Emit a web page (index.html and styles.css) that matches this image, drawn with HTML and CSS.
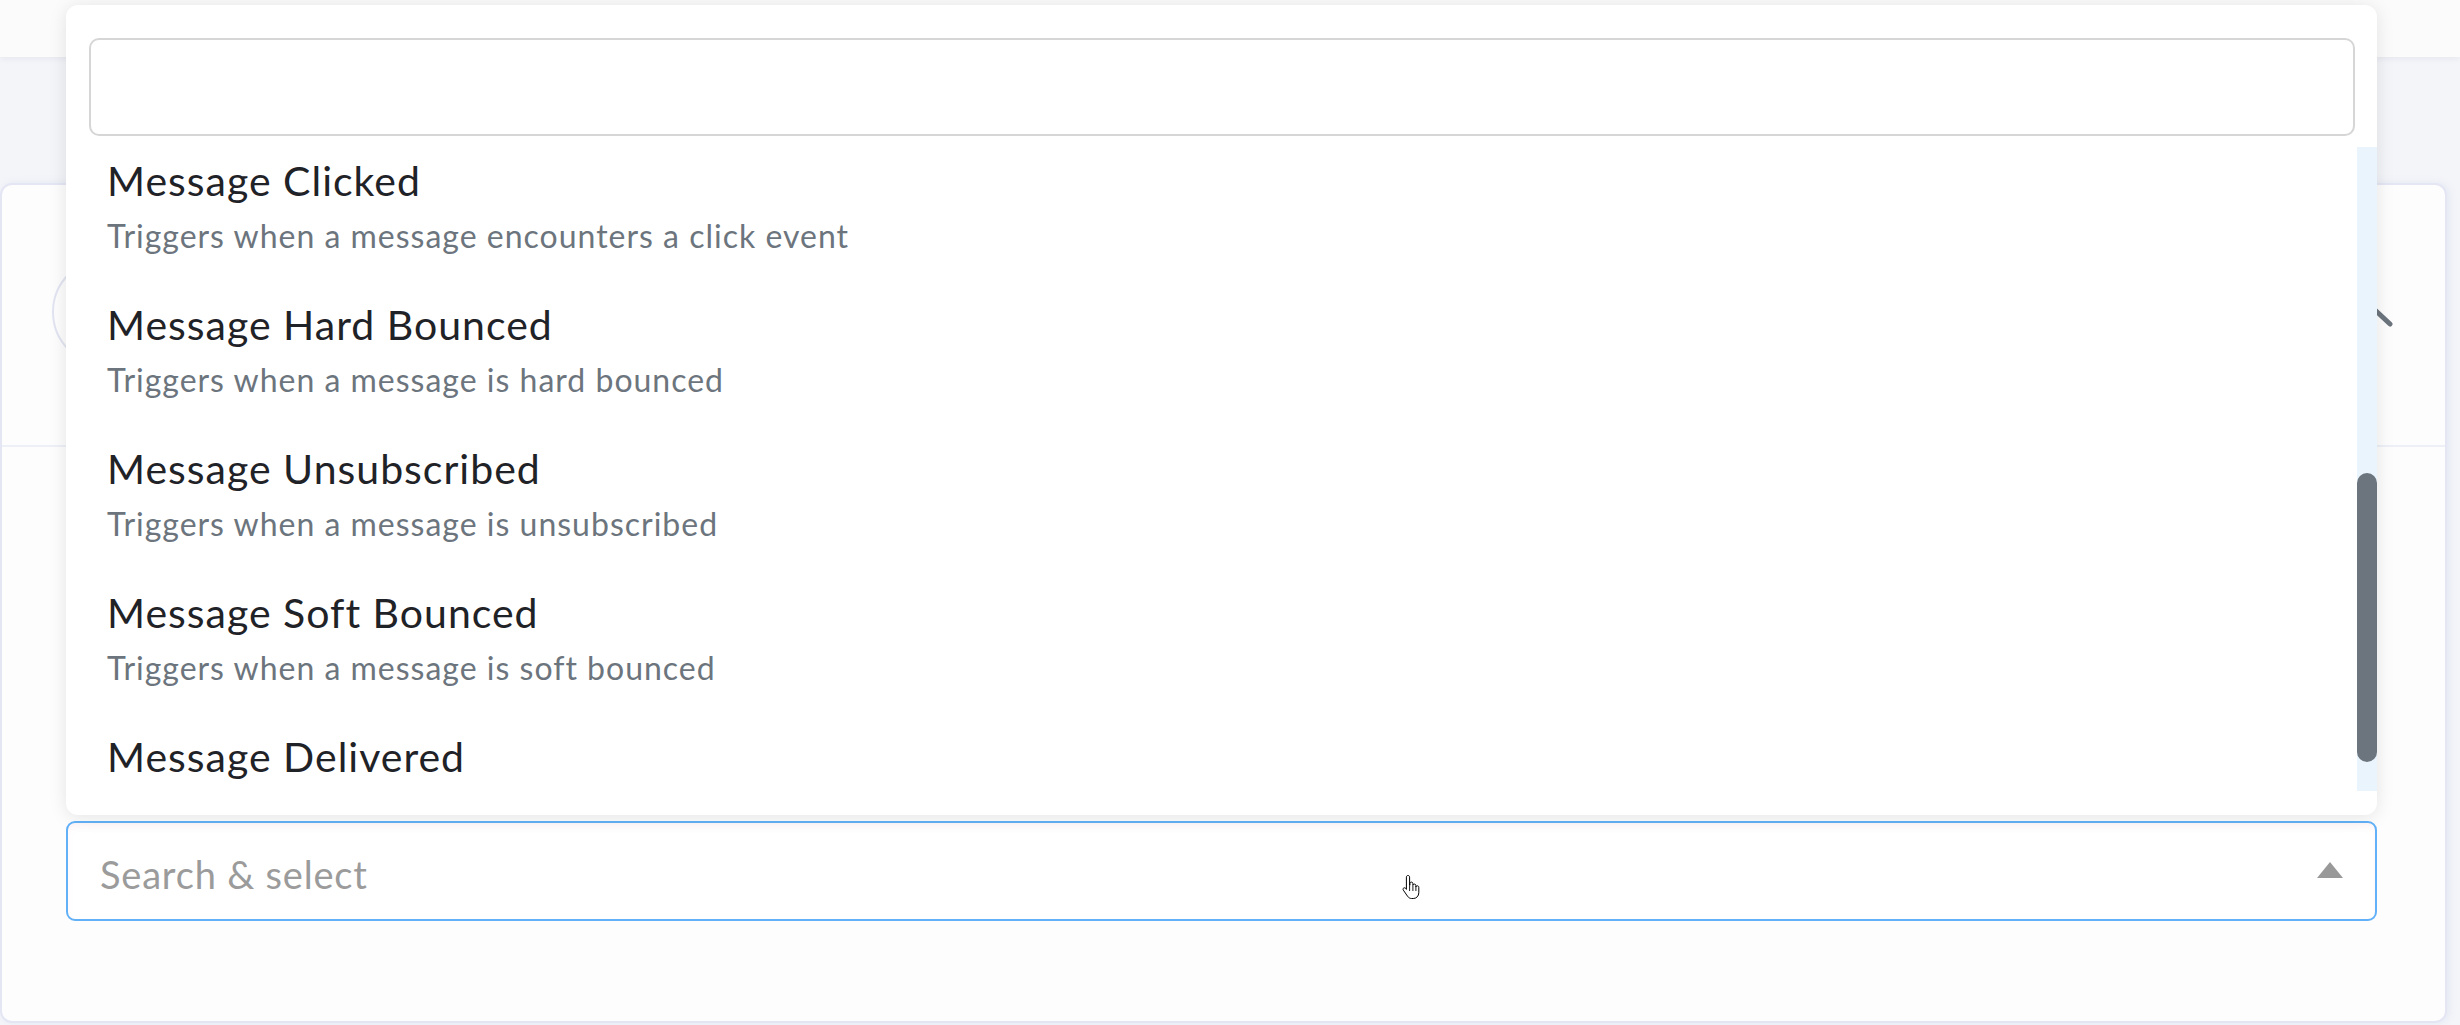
FILE: index.html
```html
<!DOCTYPE html>
<html lang="en">
<head>
  <meta charset="UTF-8" />
  <meta name="viewport" content="width=device-width, initial-scale=1.0" />
  <title>Webhook trigger</title>
  <link rel="stylesheet" href="styles.css">
</head>
<body>
  <header class="topbar"></header>

  <main class="page">
    <section class="card">
      <div class="card-head">
        <div class="avatar"></div>
        <svg class="chevron" viewBox="0 0 36 20" width="36" height="20">
          <path d="M3 17 L18 3 L33 17" fill="none" stroke="#6c757d" stroke-width="5" stroke-linecap="round" stroke-linejoin="round"/>
        </svg>
      </div>

      <div class="card-body">
        <div class="picker">
          <div class="picker-menu">
            <input type="text" class="picker-search" />
            <div class="picker-scroll">
              <ul class="picker-list">
                <li class="option">
                  <div class="option-title">Message Clicked</div>
                  <div class="option-desc">Triggers when a message encounters a click event</div>
                </li>
                <li class="option">
                  <div class="option-title">Message Hard Bounced</div>
                  <div class="option-desc">Triggers when a message is hard bounced</div>
                </li>
                <li class="option">
                  <div class="option-title">Message Unsubscribed</div>
                  <div class="option-desc">Triggers when a message is unsubscribed</div>
                </li>
                <li class="option">
                  <div class="option-title">Message Soft Bounced</div>
                  <div class="option-desc">Triggers when a message is soft bounced</div>
                </li>
                <li class="option">
                  <div class="option-title">Message Delivered</div>
                </li>
              </ul>
              <div class="scrollbar">
                <div class="scrollbar-thumb"></div>
              </div>
            </div>
          </div>

          <div class="picker-control">
            <span class="placeholder">Search &amp; select</span>
            <span class="caret"></span>
          </div>
        </div>
      </div>
    </section>
  </main>

  <svg class="cursor" viewBox="0 0 18 26" width="18" height="26">
    <path d="M6 1.5c1 0 1.6.7 1.6 1.6v8.2l.3-.1V9.6c0-.9.6-1.5 1.5-1.5s1.5.6 1.5 1.5v1.6c.2-.7.8-1.1 1.5-1.1.9 0 1.5.6 1.5 1.5v1.2c.2-.6.8-1 1.4-1 .9 0 1.5.6 1.5 1.5v5.4c0 3.3-2.3 5.8-5.5 5.8H9.6c-1.7 0-3-.8-4-2.200L1.3 16.1c-.5-.8-.3-1.7.4-2.1.7-.4 1.5-.2 2 .4l.7 1V3.1C4.4 2.2 5 1.5 6 1.5z" fill="#fff" stroke="#000" stroke-width="1"/>
    <path d="M7.6 11.3V17M10.9 11.2V17M13.9 12.2V17" stroke="#000" stroke-width="0.9"/>
  </svg>
</body>
</html>
```

FILE: styles.css
```css
* {
  box-sizing: border-box;
}
html, body {
  height: 100%;
}
body {
  margin: 0;
  background: #f3f5f9;
  font-family: 'Lato', 'Open Sans', sans-serif;
  overflow: hidden;
}
.topbar {
  height: 57px;
  background: #fbfbfc;
  box-shadow: 0 2px 6px rgba(30, 40, 80, 0.06);
  position: relative;
  z-index: 1;
}
.page {
  padding: 126px 13px 0 0;
}
.card {
  background: #fdfdfe;
  border: 2px solid #e4e6f4;
  border-radius: 12px;
  height: 840px;
  box-shadow: 2px 0 8px rgba(120, 120, 200, 0.1);
}
.card-head {
  height: 262px;
  display: flex;
  align-items: center;
  justify-content: space-between;
  padding: 0 52px 0 50px;
  border-bottom: 2px solid #eef0f8;
}
.avatar {
  width: 108px;
  height: 108px;
  border-radius: 50%;
  border: 2px solid #e2e5f1;
  margin-top: -6px;
}
.chevron {
  margin-top: 4px;
}
.card-body {
  padding: 374px 68px 0 64px;
}
.picker {
  position: relative;
}
.picker-control {
  height: 100px;
  background: #fff;
  border: 2px solid #62b1f8;
  border-radius: 9px;
  box-shadow: inset 0 4px 6px rgba(255, 200, 220, 0.15);
  display: flex;
  align-items: center;
  justify-content: space-between;
  padding: 0 32px;
}
.placeholder {
  font-size: 38px;
  letter-spacing: 0.8px;
  color: #9b9b9b;
  margin-top: 5px;
}
.caret {
  width: 0;
  height: 0;
  border-left: 13px solid transparent;
  border-right: 13px solid transparent;
  border-bottom: 16px solid #999;
  margin-top: -2px;
}

/* open menu, lifted above the control */
.picker-menu {
  position: absolute;
  left: 0;
  right: 0;
  bottom: calc(100% + 6px);
  background: #fff;
  border-radius: 12px;
  box-shadow: 0 2px 18px rgba(0, 0, 0, 0.1);
  padding: 33px 0 24px 23px;
  z-index: 5;
}
.picker-search {
  display: block;
  width: calc(100% - 22px);
  height: 98px;
  border: 2px solid #d6d6d6;
  border-radius: 10px;
  outline: none;
  font: inherit;
  font-size: 38px;
  padding: 0 20px;
}
.picker-scroll {
  display: flex;
  height: 644px;
  margin-top: 11px;
}
.picker-list {
  flex: 1;
  list-style: none;
  margin: 0;
  padding: 0;
  overflow: hidden;
}
.scrollbar {
  width: 20px;
  background: #eaf4fd;
}
.scrollbar-thumb {
  margin-top: 326px;
  height: 289px;
  background: #6c757d;
  border-radius: 10px;
}
.option {
  height: 144px;
  padding: 11px 18px 0;
}
.option-title {
  font-size: 41px;
  letter-spacing: 1px;
  line-height: 46px;
  color: #1f2226;
}
.option-desc {
  margin-top: 12px;
  font-size: 32px;
  letter-spacing: 1px;
  line-height: 40px;
  color: #6c757d;
}

.cursor {
  position: absolute;
  left: 1402px;
  top: 874px;
  z-index: 10;
}
```
